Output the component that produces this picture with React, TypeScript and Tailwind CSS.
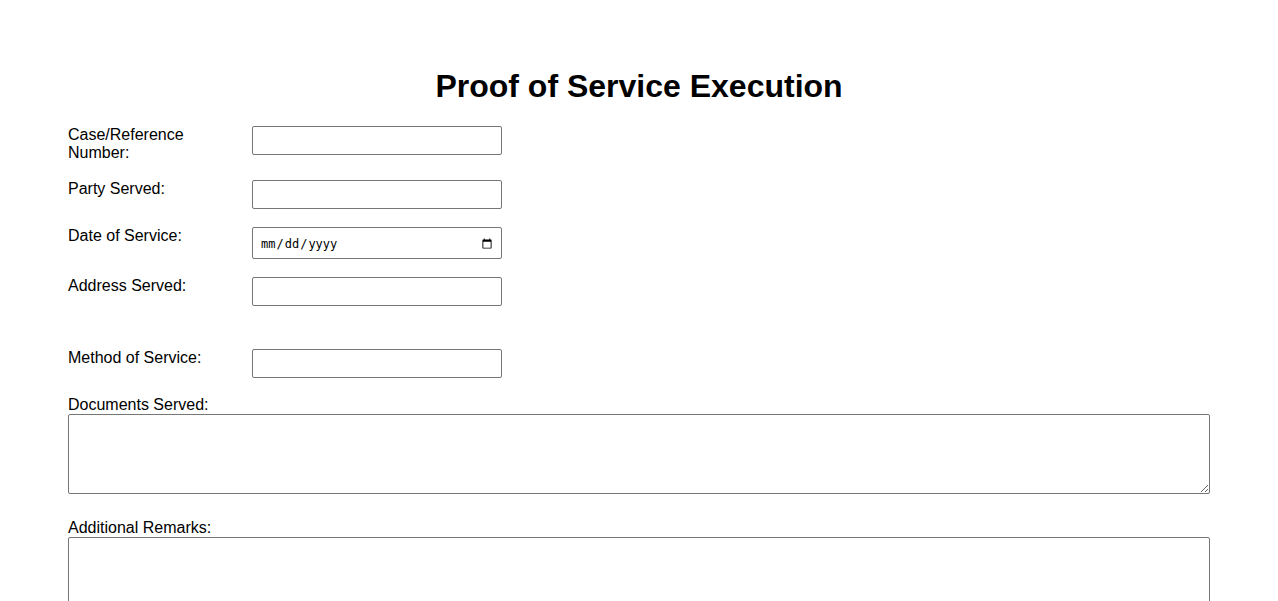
import React from "react";

const inputCls =
  "w-[250px] h-[29px] border border-[#767676] rounded-[2px] px-[3px] text-[13.33px] bg-white outline-none";

function Row({ label, children, className = "" }: { label: string; children: React.ReactNode; className?: string }) {
  return (
    <div className={`flex items-start ${className}`}>
      <label className="w-[150px] mr-[34px] text-[16px] leading-[18.4px]">{label}</label>
      {children}
    </div>
  );
}

export default function App() {
  return (
    <div className="min-h-screen bg-white text-black font-['Liberation_Sans',Arial,sans-serif] px-[68px] pt-[68px]">
      <h1 className="text-center text-[32px] leading-[37px] font-bold mb-[21px]">Proof of Service Execution</h1>
      <form className="flex flex-col">
        <Row label="Case/Reference Number:" className="mb-[17px]">
          <input type="text" className={inputCls} />
        </Row>
        <Row label="Party Served:" className="mb-[18px]">
          <input type="text" className={inputCls} />
        </Row>
        <Row label="Date of Service:" className="mb-[18px]">
          <input
            type="date"
            className="w-[250px] h-[32px] border border-[#767676] rounded-[2px] pl-[7px] pr-[6px] pt-[2px] text-[12px] font-['DejaVu_Sans_Mono',monospace] bg-white outline-none"
          />
        </Row>
        <Row label="Address Served:" className="mb-[43px]">
          <input type="text" className={inputCls} />
        </Row>
        <Row label="Method of Service:" className="mb-[18px]">
          <input type="text" className={inputCls} />
        </Row>
        <label className="block text-[16px] leading-[18px]">Documents Served:</label>
        <textarea className="block w-full h-[80px] border border-[#767676] rounded-[2px] p-[2px] text-[13.33px] bg-white outline-none mb-[25px]" />
        <label className="block text-[16px] leading-[18px]">Additional Remarks:</label>
        <textarea className="block w-full h-[80px] border border-[#767676] rounded-[2px] p-[2px] text-[13.33px] bg-white outline-none" />
      </form>
    </div>
  );
}
